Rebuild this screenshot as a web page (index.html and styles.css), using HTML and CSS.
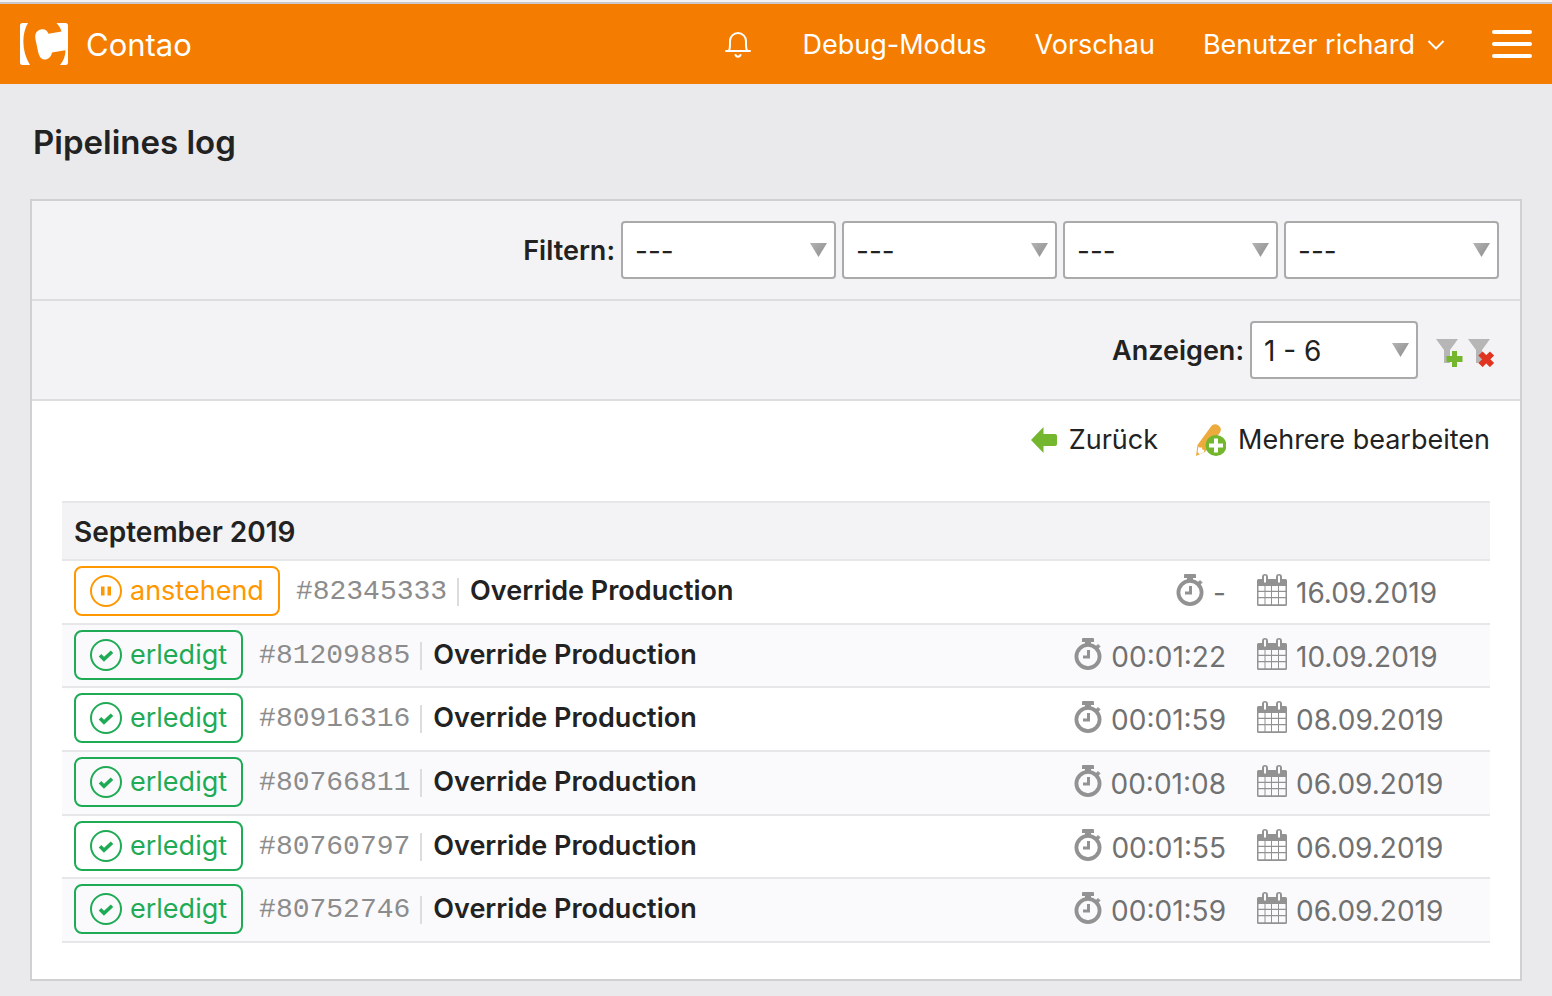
FILE: index.html
```html
<!DOCTYPE html>
<html lang="de">
<head>
<meta charset="utf-8">
<title>Pipelines log</title>
<link rel="stylesheet" href="styles.css">
</head>
<body>
<svg class="sprite" aria-hidden="true">
  <symbol id="i-check" viewBox="0 0 32 32">
    <circle cx="16" cy="16" r="15" fill="none" stroke="currentColor" stroke-width="2"/>
    <path d="M10 16.300l4 4 8-7.500" fill="none" stroke="currentColor" stroke-width="3.600"/>
  </symbol>
  <symbol id="i-pause" viewBox="0 0 32 32">
    <circle cx="16" cy="16" r="15" fill="none" stroke="currentColor" stroke-width="2"/>
    <path d="M11 11.500h3.500v9H11zM17.500 11.500H21v9h-3.500z" fill="currentColor"/>
  </symbol>
  <symbol id="i-watch" viewBox="0 0 28 32">
    <path d="M9 0h10a1 1 0 0 1 1 1v3h-3v3h-6V4H8V1a1 1 0 0 1 1-1z" fill="#929292"/>
    <path d="M21.500 9l2.500-2.500 2 2-2.500 2.500z" fill="#929292" stroke="#929292"/>
    <circle cx="14" cy="18.500" r="11.600" fill="none" stroke="#929292" stroke-width="3.800"/>
    <path d="M14.500 12v7H9" fill="none" stroke="#929292" stroke-width="3"/>
  </symbol>
  <symbol id="i-cal" viewBox="0 0 30 32">
    <path fill-rule="evenodd" fill="#929292" d="M1.500 5H5V3a3 3 0 0 1 6 0v2h8V3a3 3 0 0 1 6 0v2h3.500A1.500 1.500 0 0 1 30 6.500v24a1.500 1.500 0 0 1-1.500 1.500h-27A1.500 1.500 0 0 1 0 30.500v-24A1.500 1.500 0 0 1 1.500 5zM7 2.500v6h2v-6a1 1 0 0 0-2 0zM21 2.500v6h2v-6a1 1 0 0 0-2 0zM1.500 12v4.800h6V12zM8.500 12v4.800H14V12zM15 12v4.800h6V12zM22 12v4.800h6.500V12zM1.500 18v5h6v-5zM8.500 18v5H14v-5zM15 18v5h6v-5zM22 18v5h6.500v-5zM1.500 24.300v6h6v-6zM8.500 24.300v6H14v-6zM15 24.300v6h6v-6zM22 24.300v6h6.500v-6z"/>
  </symbol>
</svg>

<header class="topbar">
  <a class="brand" href="#">
    <svg class="logo" viewBox="0 0 48 42" aria-hidden="true">
      <path fill="#fff" d="M2.500 0H8C1.500 11 1.500 28 10 42H2.500A2.500 2.500 0 0 1 0 39.500v-37A2.500 2.500 0 0 1 2.500 0zM36.500 0h9A2.500 2.500 0 0 1 48 2.500V26.700L32 29.500C31 34.500 28 36.600 24.500 36.500C20.500 36.300 18.800 33 17.500 26C16.500 20 14.800 16 15.300 12C15.900 8.500 18.500 6.400 22 6.200C25.500 6 27.500 8 28.500 10.700L41.500 8.500C40.500 5 39 2.500 36.500 0zM48 27v12.500a2.500 2.500 0 0 1-2.500 2.500H40C43.500 38 45.500 33 45.500 27z"/>
    </svg>
    <span class="brand-name">Contao</span>
  </a>
  <nav class="topnav">
    <a href="#" aria-label="Benachrichtigungen">
      <svg class="bell" viewBox="0 0 26 28" aria-hidden="true" fill="none" stroke="#fff" stroke-width="2" stroke-linecap="round" stroke-linejoin="round">
        <path d="M1 20h24M4 19.500C5.200 17.500 5 15.500 5 10a8 8 0 0 1 16 0c0 5.500-.2 7.500 1 9.500M10.500 24c1 2.300 4 2.300 5 0"/>
      </svg>
    </a>
    <a href="#">Debug-Modus</a>
    <a href="#">Vorschau</a>
    <button class="user" type="button">Benutzer richard
      <svg class="chevron" viewBox="0 0 18 12" aria-hidden="true"><path d="M1.500 2L9 9.500 16.500 2" fill="none" stroke="#fff" stroke-width="2"/></svg>
    </button>
  </nav>
  <button class="burger" type="button" aria-label="Menü"><span></span><span></span><span></span></button>
</header>

<main class="main">
  <h1 class="headline">Pipelines log</h1>
  <section class="panel">
    <div class="tools">
      <strong class="label">Filtern:</strong>
      <span class="select"><select aria-label="Filter 1"><option>---</option></select></span>
      <span class="select"><select aria-label="Filter 2"><option>---</option></select></span>
      <span class="select"><select aria-label="Filter 3"><option>---</option></select></span>
      <span class="select"><select aria-label="Filter 4"><option>---</option></select></span>
    </div>
    <div class="tools">
      <label class="label" for="limit">Anzeigen:</label>
      <span class="select narrow"><select id="limit"><option>1 - 6</option></select></span>
      <div class="actions">
        <button type="button" aria-label="Filter anwenden">
          <svg viewBox="0 0 28 28" aria-hidden="true"><path d="M0 0h22l-8 11v13H8V11z" fill="#b6b6b6"/><path d="M16 12h5v5h5.500v6H21v5h-5v-5h-5.500v-6H16z" fill="#74b62e"/></svg>
        </button>
        <button type="button" aria-label="Filter zurücksetzen">
          <svg viewBox="0 0 28 28" aria-hidden="true"><path d="M0 0h22l-8 11v13H8V11z" fill="#b6b6b6"/><path d="M12.500 14.500l11.500 11.500M24 14.500L12.500 26" stroke="#e03420" stroke-width="6"/></svg>
        </button>
      </div>
    </div>
    <div class="content">
      <div class="buttons">
        <a href="#">
          <svg class="back" viewBox="0 0 26 26" aria-hidden="true"><path d="M0 13L12.500 0v7H24a2 2 0 0 1 2 2v8a2 2 0 0 1-2 2H12.500v7z" fill="#74b62e"/></svg>
          Zurück
        </a>
        <a href="#">
          <svg class="edit" viewBox="0 0 30 32" aria-hidden="true">
            <path d="M0 32L1.500 21 15 2.500C17-.3 20-.5 22.500 1.500c3 2.200 3 5 1 7.700L9 28z" fill="#edab3d"/>
            <path d="M2.500 22.500l1.500 1.300 1.800-.5.500 2.200 2 .5L8 28.300l-4.500 1.900L1.500 28z" fill="#fff"/>
            <circle cx="20" cy="21.500" r="10.500" fill="#74b62e"/>
            <path d="M18 14.500h4v5h5v4h-5v5h-4v-5h-5v-4h5z" fill="#fff"/>
          </svg>
          Mehrere bearbeiten
        </a>
      </div>
      <table class="listing">
        <thead><tr><th colspan="3" scope="colgroup">September 2019</th></tr></thead>
        <tbody>
          <tr>
            <td class="job"><div class="line"><span class="badge pending"><svg class="state"><use href="#i-pause"/></svg>anstehend</span><span class="id">#82345333</span><strong class="name">Override Production</strong></div></td>
            <td class="time"><div class="meta end"><svg class="watch"><use href="#i-watch"/></svg>-</div></td>
            <td class="date"><div class="meta"><svg class="cal"><use href="#i-cal"/></svg>16.09.2019</div></td>
          </tr>
          <tr>
            <td class="job"><div class="line"><span class="badge"><svg class="state"><use href="#i-check"/></svg>erledigt</span><span class="id">#81209885</span><strong class="name">Override Production</strong></div></td>
            <td class="time"><div class="meta end"><svg class="watch"><use href="#i-watch"/></svg>00:01:22</div></td>
            <td class="date"><div class="meta"><svg class="cal"><use href="#i-cal"/></svg>10.09.2019</div></td>
          </tr>
          <tr>
            <td class="job"><div class="line"><span class="badge"><svg class="state"><use href="#i-check"/></svg>erledigt</span><span class="id">#80916316</span><strong class="name">Override Production</strong></div></td>
            <td class="time"><div class="meta end"><svg class="watch"><use href="#i-watch"/></svg>00:01:59</div></td>
            <td class="date"><div class="meta"><svg class="cal"><use href="#i-cal"/></svg>08.09.2019</div></td>
          </tr>
          <tr>
            <td class="job"><div class="line"><span class="badge"><svg class="state"><use href="#i-check"/></svg>erledigt</span><span class="id">#80766811</span><strong class="name">Override Production</strong></div></td>
            <td class="time"><div class="meta end"><svg class="watch"><use href="#i-watch"/></svg>00:01:08</div></td>
            <td class="date"><div class="meta"><svg class="cal"><use href="#i-cal"/></svg>06.09.2019</div></td>
          </tr>
          <tr>
            <td class="job"><div class="line"><span class="badge"><svg class="state"><use href="#i-check"/></svg>erledigt</span><span class="id">#80760797</span><strong class="name">Override Production</strong></div></td>
            <td class="time"><div class="meta end"><svg class="watch"><use href="#i-watch"/></svg>00:01:55</div></td>
            <td class="date"><div class="meta"><svg class="cal"><use href="#i-cal"/></svg>06.09.2019</div></td>
          </tr>
          <tr>
            <td class="job"><div class="line"><span class="badge"><svg class="state"><use href="#i-check"/></svg>erledigt</span><span class="id">#80752746</span><strong class="name">Override Production</strong></div></td>
            <td class="time"><div class="meta end"><svg class="watch"><use href="#i-watch"/></svg>00:01:59</div></td>
            <td class="date"><div class="meta"><svg class="cal"><use href="#i-cal"/></svg>06.09.2019</div></td>
          </tr>
        </tbody>
      </table>
    </div>
  </section>
</main>
</body>
</html>
```
FILE: styles.css
```css
* { box-sizing: border-box; }
body {
  margin: 0;
  background: #eaeaec;
  color: #222;
  font: 27px/32px Inter, "Liberation Sans", sans-serif;
  border-top: 2px solid #f3f3f6;
}
a { color: inherit; text-decoration: none; }
button { margin: 0; padding: 0; border: 0; background: none; color: inherit; font: inherit; cursor: pointer; }
svg { display: block; flex: none; }
.sprite { position: absolute; width: 0; height: 0; }

.topbar {
  display: flex;
  align-items: center;
  height: 82px;
  padding: 0 20px;
  background: #f47c00;
  border-top: 2px solid #c9c9cd;
  color: #fff;
}
.brand { display: flex; align-items: center; gap: 18px; font-size: 31px; }
.brand-name { padding-top: 2px; }
.logo { width: 48px; height: 42px; }
.topnav { display: flex; align-items: center; gap: 48px; margin-left: auto; margin-right: 47px; padding-top: 2px; }
.bell { width: 26px; height: 28px; margin: 0 3px 0 0; }
.user { display: flex; align-items: center; gap: 12px; }
.chevron { width: 18px; height: 12px; }
.burger { display: flex; flex-direction: column; gap: 8px; }
.burger span { width: 40px; height: 4px; border-radius: 2px; background: #fff; }

.main { padding: 0 30px 15px; }
.headline { margin: 0; padding: 38px 3px 37px; font-size: 33px; line-height: 40px; font-weight: 600; }

.panel { border: 2px solid #d0d0d3; background: #fff; }
.tools {
  display: flex;
  align-items: center;
  justify-content: flex-end;
  gap: 6px;
  height: 100px;
  padding: 0 21px;
  background: #f3f3f5;
  border-bottom: 2px solid #dddde0;
}
.label { padding-top: 2px; font-weight: 600; }
.select { position: relative; width: 215px; }
.narrow { width: 168px; }
.select::after {
  content: "";
  position: absolute;
  top: 22px;
  right: 9px;
  width: 17px;
  height: 14px;
  background: linear-gradient(135deg, #b4b4b4, #8c8c8c);
  clip-path: polygon(0 0, 100% 0, 50% 100%);
  pointer-events: none;
}
.select select {
  display: block;
  appearance: none;
  width: 100%;
  height: 58px;
  padding: 2px 12px 0;
  border: 2px solid #aaa;
  border-radius: 4px;
  background: #fff;
  color: #222;
  font: inherit;
  font-size: 28px;
}
.actions { display: flex; gap: 4px; padding: 6px 3px 0 12px; }
.actions svg { width: 28px; height: 28px; }

.content { padding: 0 30px 36px; }
.buttons { display: flex; justify-content: flex-end; gap: 38px; padding: 23px 0 45px; }
.buttons a { display: flex; align-items: center; gap: 12px; }
.back { width: 26px; height: 26px; }
.edit { width: 30px; height: 32px; }

.listing { width: 100%; border-collapse: separate; border-spacing: 0; }
.listing th {
  height: 60px;
  padding: 2px 12px 0;
  background: #f3f3f5;
  border-top: 2px solid #e7e7e9;
  border-bottom: 2px solid #e7e7e9;
  text-align: left;
  font-size: 28px;
  font-weight: 600;
}
.listing td { height: 64px; padding: 0; border-bottom: 2px solid #e7e7e9; }
.listing tr:nth-child(3n+2) td { height: 63px; }
.listing tbody tr:nth-child(even) { background: #fafafc; }
.line { display: flex; align-items: center; padding: 0 0 2px 12px; }
.badge {
  display: flex;
  align-items: center;
  gap: 8px;
  height: 50px;
  padding: 0 14px;
  border: 2px solid #1fab55;
  border-radius: 8px;
  color: #1fab55;
}
.pending { border-color: #ff9800; color: #ff9800; }
.state { width: 32px; height: 32px; }
.id { margin: 2px 0 0 16px; padding-right: 10px; border-right: 2px solid #dcdcde; color: #8c8c8c; font: 28px/28px "Liberation Mono", monospace; }
.name { margin-left: 11px; font-weight: 600; }
.listing .time { width: 200px; }
.listing .date { width: 264px; padding-left: 31px; }
.meta { display: flex; align-items: flex-start; gap: 9px; padding-top: 2px; color: #717171; font-size: 28px; line-height: 38px; }
.end { justify-content: flex-end; }
.watch { width: 28px; height: 32px; }
.cal { width: 30px; height: 32px; }
```
